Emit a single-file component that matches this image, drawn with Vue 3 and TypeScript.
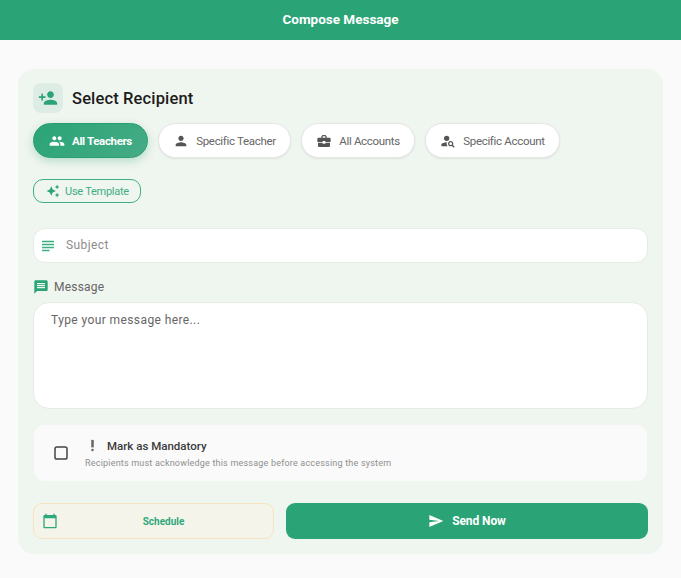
<script setup lang="ts">
interface Chip { label: string; path: string; active?: boolean }
const chips: Chip[] = [
  { label: 'All Teachers', active: true, path: 'M16 11c1.66 0 2.99-1.34 2.99-3S17.66 5 16 5c-1.66 0-3 1.34-3 3s1.34 3 3 3zm-8 0c1.66 0 2.99-1.34 2.99-3S9.66 5 8 5C6.34 5 5 6.34 5 8s1.34 3 3 3zm0 2c-2.33 0-7 1.17-7 3.5V19h14v-2.5c0-2.33-4.67-3.5-7-3.5zm8 0c-.29 0-.62.02-.97.05 1.16.84 1.97 1.97 1.97 3.45V19h6v-2.5c0-2.33-4.67-3.5-7-3.5z' },
  { label: 'Specific Teacher', path: 'M12 12c2.21 0 4-1.79 4-4s-1.79-4-4-4-4 1.79-4 4 1.79 4 4 4zm0 2c-2.67 0-8 1.34-8 4v2h16v-2c0-2.66-5.33-4-8-4z' },
  { label: 'All Accounts', path: 'M10 16v-1H3.01L3 19c0 1.11.89 2 2 2h14c1.11 0 2-.89 2-2v-4h-7v1h-4zm10-9h-4.01V5l-2-2h-4l-2 2v2H4c-1.1 0-2 .9-2 2v3c0 1.11.89 2 2 2h6v-2h4v2h6c1.1 0 2-.9 2-2V9c0-1.1-.9-2-2-2zm-6 0h-4V5h4v2z' },
  { label: 'Specific Account', path: 'M6 8a4 4 0 1 0 8 0a4 4 0 1 0-8 0zM10.35 14.01C7.62 13.91 2 15.27 2 18v2h9.54c-2.47-2.76-1.23-5.89-1.19-5.99zM19.43 18.02c.36-.59.57-1.28.57-2.02 0-2.21-1.79-4-4-4s-4 1.79-4 4 1.79 4 4 4c.74 0 1.43-.22 2.02-.57L20.59 22 22 20.59l-2.57-2.57zM16 18c-1.1 0-2-.9-2-2s.9-2 2-2 2 .9 2 2-.9 2-2 2z' }
]
</script>

<template>
  <div class="page">
    <header class="topbar">Compose Message</header>
    <main class="card">
      <div class="section-head">
        <span class="head-icon">
          <svg viewBox="0 0 24 24" width="20" height="20"><path d="M15 12c2.21 0 4-1.79 4-4s-1.79-4-4-4-4 1.79-4 4 1.79 4 4 4zm-9-2V7H4v3H1v2h3v3h2v-3h3v-2H6zm9 4c-2.67 0-8 1.34-8 4v2h16v-2c0-2.66-5.33-4-8-4z"/></svg>
        </span>
        <h2>Select Recipient</h2>
      </div>

      <div class="chips">
        <button v-for="c in chips" :key="c.label" class="chip" :class="{ active: c.active }">
          <svg viewBox="0 0 24 24" width="16" height="16"><path :d="c.path"/></svg>
          <span>{{ c.label }}</span>
        </button>
      </div>

      <button class="template">
        <svg viewBox="0 0 24 24" width="14" height="14"><path d="M19 9l1.25-2.75L23 5l-2.75-1.25L19 1l-1.25 2.75L15 5l2.75 1.25L19 9zm-7.5.5L9 4 6.5 9.5 1 12l5.5 2.5L9 20l2.5-5.5L17 12l-5.5-2.5zM19 15l-1.25 2.75L15 19l2.75 1.25L19 23l1.25-2.75L23 19l-2.75-1.25L19 15z"/></svg>
        <span>Use Template</span>
      </button>

      <label class="subject">
        <svg viewBox="0 0 24 24" width="18" height="18"><path d="M14 17H4v2h10v-2zm6-8H4v2h16V9zM4 15h16v-2H4v2zM4 5v2h16V5H4z"/></svg>
        <input type="text" placeholder="Subject" />
      </label>

      <div class="msg-label">
        <svg viewBox="0 0 24 24" width="16" height="16"><path d="M20 2H4c-1.1 0-1.99.9-1.99 2L2 22l4-4h14c1.1 0 2-.9 2-2V4c0-1.1-.9-2-2-2zm-2 12H6v-2h12v2zm0-3H6V9h12v2zm0-3H6V6h12v2z"/></svg>
        <span>Message</span>
      </div>
      <textarea class="message" placeholder="Type your message here..."></textarea>

      <div class="mandatory">
        <svg class="check" viewBox="0 0 24 24" width="18" height="18"><rect x="4" y="4" width="16" height="16" rx="2.5"/></svg>
        <div class="mand-text">
          <div class="mand-title">
            <svg viewBox="0 0 24 24" width="15" height="15"><circle cx="12" cy="19" r="2"/><path d="M10 3h4v12h-4z"/></svg>
            <span>Mark as Mandatory</span>
          </div>
          <p>Recipients must acknowledge this message before accessing the system</p>
        </div>
      </div>

      <div class="actions">
        <button class="schedule">
          <svg viewBox="0 0 24 24" width="16" height="16"><path d="M20 3h-1V1h-2v2H7V1H5v2H4c-1.1 0-2 .9-2 2v16c0 1.1.9 2 2 2h16c1.1 0 2-.9 2-2V5c0-1.1-.9-2-2-2zm0 18H4V8h16v13z"/></svg>
          <span>Schedule</span>
        </button>
        <button class="send">
          <svg viewBox="0 0 24 24" width="16" height="16"><path d="M2.01 21L23 12 2.01 3 2 10l15 2-15 2z"/></svg>
          <span>Send Now</span>
        </button>
      </div>
    </main>
  </div>
</template>

<style>
html, body { margin: 0; background: #fafafa; }
</style>

<style scoped>
.page {
  width: 681px;
  height: 578px;
  overflow: hidden;
  background: #fafafa;
  font-family: Roboto, "Liberation Sans", sans-serif;
  box-sizing: border-box;
}
.topbar {
  height: 40px;
  box-sizing: border-box;
  padding-bottom: 2px;
  background: #2aa476;
  color: #fff;
  font-size: 13.5px;
  font-weight: 700;
  display: flex;
  align-items: center;
  justify-content: center;
}
.card {
  margin: 29px 18px 0;
  height: 485px;
  box-sizing: border-box;
  padding: 14px 15px;
  background: #eff5ef;
  border-radius: 16px;
  display: flex;
  flex-direction: column;
}
.section-head { display: flex; align-items: center; gap: 9px; height: 30px; }
.head-icon {
  width: 30px;
  height: 30px;
  border-radius: 8px;
  background: #ddede5;
  display: flex;
  align-items: center;
  justify-content: center;
  fill: #2aa476;
}
h2 { margin: 0; font-size: 16.5px; font-weight: 500; color: #1c1c1c; letter-spacing: 0.14px; }
.chips { display: flex; gap: 10.3px; margin-top: 10px; }
.chip {
  height: 35px;
  box-sizing: border-box;
  padding: 0 14px;
  border: 1px solid #e6e6e6;
  border-radius: 18px;
  background: #fff;
  color: #666;
  fill: #555;
  font: 400 11.5px Roboto, sans-serif;
  letter-spacing: -0.31px;
  display: flex;
  align-items: center;
  gap: 7px;
  box-shadow: 0 1px 2px rgba(0, 0, 0, 0.08);
}
.chip.active {
  padding: 0 15px;
  background: linear-gradient(135deg, #2aa476, #45ab86);
  border-color: #2a9d72;
  color: #fff;
  fill: #fff;
  font-weight: 700;
  letter-spacing: -0.35px;
  box-shadow: 0 3px 8px rgba(42, 164, 118, 0.3);
}
.template {
  margin-top: 21px;
  align-self: flex-start;
  height: 24px;
  box-sizing: border-box;
  padding: 0 11px 0 12px;
  background: transparent;
  border: 1.5px solid #3fae85;
  border-radius: 10px;
  color: #3fae85;
  fill: #2aa476;
  font: 400 11px Roboto, sans-serif;
  letter-spacing: -0.25px;
  display: flex;
  align-items: center;
  gap: 5px;
}
.subject {
  margin-top: 25px;
  height: 35px;
  box-sizing: border-box;
  background: #fff;
  border: 1px solid #e6ebe6;
  border-radius: 12px;
  padding-left: 5px;
  display: flex;
  align-items: center;
  gap: 9px;
  fill: #3fae85;
}
.subject input {
  flex: 1;
  border: 0;
  outline: 0;
  background: transparent;
  padding: 0 0 2px;
  font: 400 12px Roboto, sans-serif;
  letter-spacing: 0.4px;
}
.subject input::placeholder { color: #8c8c8c; }
.msg-label {
  margin-top: 16px;
  height: 16px;
  display: flex;
  align-items: center;
  gap: 5px;
  color: #666;
  font-size: 12px;
  letter-spacing: 0.2px;
  fill: #2aa476;
}
.message {
  margin-top: 7px;
  height: 107px;
  box-sizing: border-box;
  padding: 10px 17px;
  resize: none;
  outline: 0;
  background: #fff;
  border: 1px solid #e6ebe6;
  border-radius: 16px;
  font: 400 12px Roboto, sans-serif;
  letter-spacing: 0.4px;
}
.message::placeholder { color: #666; }
.mandatory {
  margin: 16px 1px 0;
  height: 56px;
  box-sizing: border-box;
  background: #fafafa;
  border-radius: 10px;
  display: flex;
  align-items: center;
  padding-left: 18px;
  gap: 15px;
}
.check { fill: none; stroke: #444; stroke-width: 2; }
.mand-text { display: flex; flex-direction: column; gap: 5px; }
.mand-title {
  display: flex;
  align-items: center;
  gap: 7px;
  color: #3a3a3a;
  font-size: 11.5px;
  font-weight: 500;
  fill: #666;
}
.mand-text p {
  margin: 0;
  color: #8f8f8f;
  font-size: 9px;
  letter-spacing: 0.2px;
}
.actions { display: flex; gap: 12px; margin-top: 22px; height: 36px; }
.schedule {
  width: 241px;
  box-sizing: border-box;
  padding: 0 4px 0 8px;
  background: #f5f4ea;
  border: 1px solid #f7e3bf;
  border-radius: 9px;
  color: #2fa87b;
  fill: #2fa87b;
  font: 700 10px Roboto, sans-serif;
  display: flex;
  align-items: center;
}
.schedule span { flex: 1; text-align: center; }
.send {
  flex: 1;
  border: 0;
  background: #2aa476;
  border-radius: 9px;
  color: #fff;
  fill: #fff;
  font: 700 12px Roboto, sans-serif;
  letter-spacing: -0.1px;
  display: flex;
  align-items: center;
  justify-content: center;
  gap: 8px;
}
</style>
